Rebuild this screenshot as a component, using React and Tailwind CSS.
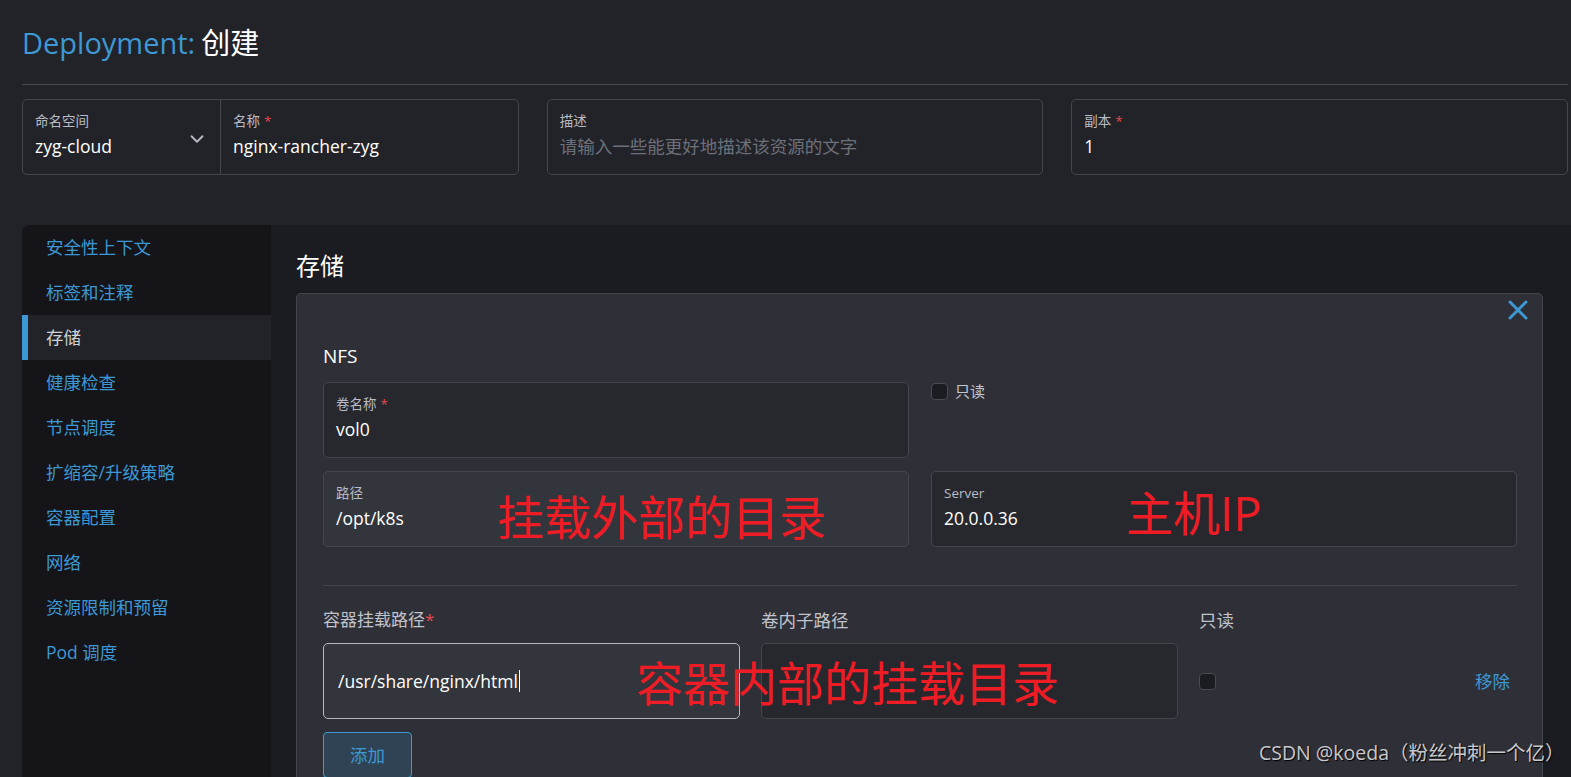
import { ChevronDown, X } from "lucide-react";

const font = { fontFamily: "'Open Sans', 'Noto Sans CJK SC', sans-serif" };

const navItems = [
  "安全性上下文",
  "标签和注释",
  "存储",
  "健康检查",
  "节点调度",
  "扩缩容/升级策略",
  "容器配置",
  "网络",
  "资源限制和预留",
  "Pod 调度",
];

function LabeledInput({ label, value, required, placeholder, className = "" }) {
  return (
    <div className={`h-[76px] rounded-[5px] border border-[#45464d] px-[12px] pt-[12px] ${className}`}>
      <div className="text-[13.5px] leading-[18px] text-[#b9bcc4]">
        {label}
        {required && <span className="ml-1 text-[#e5484d]">*</span>}
      </div>
      {placeholder ? (
        <div className="mt-[5px] text-[17.5px] leading-[22px] text-[#6d7079]">{placeholder}</div>
      ) : (
        <div className="mt-[5px] text-[17.5px] leading-[22px] text-white">{value}</div>
      )}
    </div>
  );
}

function Checkbox() {
  return <span className="inline-block h-[17px] w-[17px] rounded-[4px] border border-[#4a4b52] bg-[#1b1c21]" />;
}

export default function App() {
  return (
    <div style={font} className="relative h-[777px] w-full overflow-hidden bg-[#222329]">
      <div className="pl-[22px] pr-[3px] pt-[23px]">
        <h1 className="text-[29px] leading-[40px] text-[#3d98d3]">
          Deployment:<span className="ml-[6px] text-white">创建</span>
        </h1>
        <div className="mt-[21px] border-t border-[#4a4b52]" />

        <div className="mt-[14px] grid grid-cols-3 gap-[28px]">
          <div className="flex h-[76px] rounded-[5px] border border-[#45464d]">
            <div className="flex w-[198px] items-start justify-between border-r border-[#45464d] px-[12px] pt-[12px]">
              <div>
                <div className="text-[13.5px] leading-[18px] text-[#b9bcc4]">命名空间</div>
                <div className="mt-[5px] text-[17.5px] leading-[22px] text-white">zyg-cloud</div>
              </div>
              <ChevronDown className="mt-[16px] text-[#b9bcc4]" size={22} strokeWidth={2} />
            </div>
            <div className="flex-1 px-[12px] pt-[12px]">
              <div className="text-[13.5px] leading-[18px] text-[#b9bcc4]">
                名称<span className="ml-1 text-[#e5484d]">*</span>
              </div>
              <div className="mt-[5px] text-[17.5px] leading-[22px] text-white">nginx-rancher-zyg</div>
            </div>
          </div>
          <LabeledInput label="描述" placeholder="请输入一些能更好地描述该资源的文字" />
          <LabeledInput label="副本" required value="1" />
        </div>
      </div>

      <div className="ml-[22px] mt-[50px] flex h-[560px] overflow-hidden rounded-tl-[8px] bg-[#1b1c21]">
        <div className="w-[249px] shrink-0 bg-[#141419]">
          {navItems.map((item) => {
            const active = item === "存储";
            return (
              <div
                key={item}
                className={
                  active
                    ? "flex h-[45px] items-center border-l-[6px] border-[#3d98d3] bg-[#222329] pl-[18px] text-[17.5px] text-[#d0d2d8]"
                    : "flex h-[45px] items-center pl-[24px] text-[17.5px] text-[#3d98d3]"
                }
              >
                {item}
              </div>
            );
          })}
        </div>

        <div className="flex-1 pl-[25px] pr-[28px]">
          <h2 className="pt-[25px] text-[24px] leading-[32px] text-white">存储</h2>
          <div className="relative mt-[11px] rounded-t-[5px] border border-[#45464d] bg-[#2f3037] pl-[26px] pr-[25px] pt-[50px] pb-[40px]">
            <X className="absolute right-[8px] top-[0px] text-[#3d98d3]" size={32} strokeWidth={2.2} />
            <div className="text-[19px] leading-[24px] text-white">NFS</div>

            <div className="mt-[14px] grid grid-cols-2 gap-x-[22px] gap-y-[13px]">
              <LabeledInput label="卷名称" required value="vol0" className="bg-[#27282e]" />
              <div className="flex items-start gap-[7px] pt-[1px]">
                <Checkbox />
                <span className="text-[15px] leading-[16px] text-[#c5c8d0]">只读</span>
              </div>
              <LabeledInput label="路径" value="/opt/k8s" className="bg-[#33353d]" />
              <LabeledInput label="Server" value="20.0.0.36" className="bg-[#27282e]" />
            </div>

            <div className="mt-[38px] border-t border-[#45464d]" />

            <div className="mt-[23px] grid grid-cols-[417px_417px_1fr] gap-x-[21px]">
              <div className="text-[17px] leading-[22px] text-[#c0c3cb]">
                容器挂载路径<span className="text-[#e5484d]">*</span>
              </div>
              <div className="text-[17.5px] leading-[22px] text-[#c0c3cb]">卷内子路径</div>
              <div className="text-[17.5px] leading-[22px] text-[#c0c3cb]">只读</div>

              <div className="mt-[12px] flex h-[76px] items-center rounded-[5px] border border-[#b6b8be] bg-[#33353d] px-[14px] text-[17.5px] text-white">
                /usr/share/nginx/html
                <span className="ml-[1px] inline-block h-[22px] w-px bg-white" />
              </div>
              <div className="mt-[12px] h-[76px] rounded-[5px] border border-[#45464d] bg-[#27282e]" />
              <div className="mt-[12px] flex h-[76px] items-center justify-between pr-[7px]">
                <Checkbox />
                <span className="text-[17.5px] text-[#3d98d3]">移除</span>
              </div>
            </div>

            <button className="mt-[13px] h-[46px] w-[89px] rounded-[4px] border border-[#3d98d3] bg-[#2f4354] text-[17.5px] text-[#3d98d3]">
              添加
            </button>
          </div>
        </div>
      </div>

      <div className="pointer-events-none absolute left-[497px] top-[486px] text-[47px] leading-[62px] text-[#ee1c25]">
        挂载外部的目录
      </div>
      <div className="pointer-events-none absolute left-[1126px] top-[482px] text-[47px] leading-[62px] text-[#ee1c25]">
        主机IP
      </div>
      <div className="pointer-events-none absolute left-[636px] top-[652px] text-[47px] leading-[62px] text-[#ee1c25]">
        容器内部的挂载目录
      </div>
      <div className="pointer-events-none absolute left-[1259px] top-[740px] text-[19.5px] leading-[26px] text-[#c8c9cc] [text-shadow:1px_1px_1px_#000]">
        CSDN @koeda（粉丝冲刺一个亿）
      </div>
    </div>
  );
}
